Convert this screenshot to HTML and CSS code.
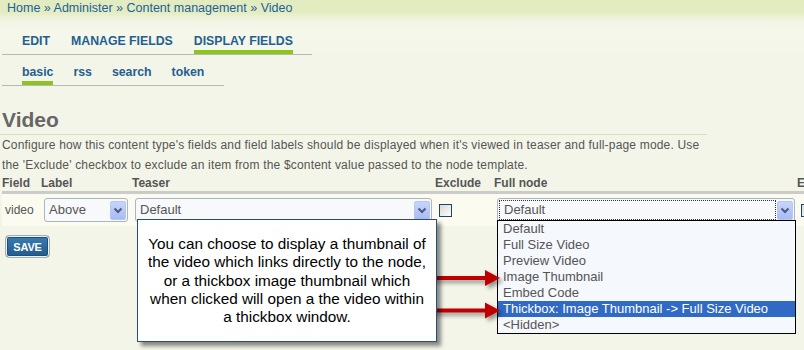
FILE: index.html
```html
<!DOCTYPE html>
<html>
<head>
<meta charset="utf-8">
<title>Video | Display fields</title>
<link rel="stylesheet" href="styles.css">
</head>
<body>
<div class="page">
  <div class="breadcrumb"><a href="#">Home</a> » <a href="#">Administer</a> » <a href="#">Content management</a> » <a href="#">Video</a></div>

  <ul class="tabs">
    <li><a href="#">EDIT</a></li>
    <li><a href="#">MANAGE FIELDS</a></li>
    <li><a href="#" class="active">DISPLAY FIELDS</a></li>
  </ul>
  <ul class="tabs subtabs">
    <li><a href="#" class="active">basic</a></li>
    <li><a href="#">rss</a></li>
    <li><a href="#">search</a></li>
    <li><a href="#">token</a></li>
  </ul>

  <h2 class="title">Video</h2>
  <p class="desc">Configure how this content type's fields and field labels should be displayed when it's viewed in teaser and full-page mode. Use the 'Exclude' checkbox to exclude an item from the $content value passed to the node template.</p>

  <div class="fields">
    <div class="thead">
      <div>Field</div><div>Label</div><div>Teaser</div><div>Exclude</div><div>Full node</div><div>Exclude</div>
    </div>
    <div class="trow">
      <div class="cell">video</div>
      <div class="cell">
        <div class="select sel-label"><span class="sel-text">Above</span><span class="sel-btn"><svg width="10" height="7" viewBox="0 0 10 7"><path d="M1.5 1.5 L5 5 L8.5 1.5" fill="none" stroke="#4a5a80" stroke-width="2"/></svg></span></div>
      </div>
      <div class="cell">
        <div class="select sel-teaser"><span class="sel-text">Default</span><span class="sel-btn"><svg width="10" height="7" viewBox="0 0 10 7"><path d="M1.5 1.5 L5 5 L8.5 1.5" fill="none" stroke="#4a5a80" stroke-width="2"/></svg></span></div>
      </div>
      <div class="cell cb-cell"><span class="checkbox"></span></div>
      <div class="cell">
        <div class="select sel-full focused"><span class="sel-text">Default</span><span class="sel-btn"><svg width="10" height="7" viewBox="0 0 10 7"><path d="M1.5 1.5 L5 5 L8.5 1.5" fill="none" stroke="#4a5a80" stroke-width="2"/></svg></span>
          <ul class="dropdown">
            <li>Default</li>
            <li>Full Size Video</li>
            <li>Preview Video</li>
            <li>Image Thumbnail</li>
            <li>Embed Code</li>
            <li class="selected">Thickbox: Image Thumbnail -&gt; Full Size Video</li>
            <li>&lt;Hidden&gt;</li>
          </ul>
        </div>
      </div>
      <div class="cell cb-cell"><span class="checkbox"></span></div>
    </div>
  </div>

  <button class="save" type="button">SAVE</button>

  <svg class="arrows" width="80" height="64" viewBox="0 0 80 64">
    <g fill="#c00000" stroke="none">
      <rect x="0" y="14" width="57" height="4"/>
      <polygon points="55,8 70,16 55,24"/>
      <rect x="0" y="46.5" width="57" height="4"/>
      <polygon points="55,40.5 70,48.5 55,56.5"/>
    </g>
  </svg>

  <div class="callout">You can choose to display a thumbnail of<br>the video which links directly to the node,<br>or a thickbox image thumbnail which<br>when clicked will open a the video within<br>a thickbox window.</div>
</div>
</body>
</html>
```

FILE: styles.css
```css
* { box-sizing: border-box; }

html, body {
  margin: 0;
  padding: 0;
  overflow: hidden;
}

body {
  background: #f3f5e8;
  background-image: linear-gradient(#e3ecc0 0px, #e3ecc0 12px, #f2f5e4 21px, #f4f7ea 32px, #f3f5e8 60px);
  background-repeat: no-repeat;
  background-size: 100% 60px;
  font-family: "Liberation Sans", Arial, sans-serif;
  font-size: 12px;
  color: #555;
}

.page {
  position: relative;
  width: 804px;
  height: 350px;
}

a {
  color: #22609a;
  text-decoration: none;
}

.breadcrumb {
  font-size: 12.5px;
  line-height: 16px;
  padding-left: 7px;
  color: #22609a;
}

.tabs {
  list-style: none;
  margin: 17px 0 0 2px;
  padding: 0 0 0 20px;
  width: 310px;
  display: flex;
  gap: 21px;
  border-bottom: 1px solid #b8b8b8;
}

.tabs a {
  display: block;
  font-weight: bold;
  font-size: 12.3px;
  line-height: 16px;
  padding-bottom: 1px;
  border-bottom: 4px solid transparent;
  color: #235f91;
}

.tabs a.active {
  border-bottom-color: #8dc51f;
}

.subtabs {
  margin-top: 9px;
  width: 222px;
  gap: 20px;
}

.subtabs a {
  font-size: 12.3px;
}

.title {
  margin: 22px 0 0 0;
  padding: 0 0 2px 2px;
  width: 707px;
  font-size: 21px;
  line-height: 24px;
  font-weight: bold;
  color: #666;
  border-bottom: 1px solid #d9ddb8;
}

.desc {
  margin: 0;
  padding-left: 2px;
  width: 707px;
  font-size: 12px;
  line-height: 20px;
  letter-spacing: 0.18px;
  color: #555;
}

.fields {
  margin-left: 2px;
  width: 860px;
}

.thead, .trow {
  display: grid;
  grid-template-columns: 39px 91px 303px 59px 303px 65px;
}

.thead {
  font-weight: bold;
  font-size: 12px;
  line-height: 16px;
  color: #555;
  border-bottom: 3px solid #cbcbcb;
}

.trow {
  background: #fbfcef;
  padding: 4px 0;
  align-items: center;
}

.cell {
  padding-left: 3px;
  font-size: 12px;
  line-height: 16px;
  color: #555;
}

.cb-cell {
  padding-left: 4px;
  display: flex;
  align-items: center;
}

.checkbox {
  display: block;
  width: 13px;
  height: 13px;
  border: 1px solid #1c4473;
  background: linear-gradient(135deg, #dcdcd4, #fbfbf8);
}

.select {
  position: relative;
  display: flex;
  align-items: center;
  height: 24px;
  border: 1px solid #a9b6c6;
  border-radius: 3px;
  background: #f7f9fb;
  font-size: 13px;
  color: #555;
}

.sel-label { width: 84px; }
.sel-teaser { width: 297px; }
.sel-full { width: 298px; }

.sel-text {
  flex: 1;
  padding-left: 4px;
  line-height: 18px;
}

.focused .sel-text {
  margin: 0 1px;
  border: 1px dotted #333;
  height: 20px;
  padding-left: 4px;
}

.sel-btn {
  width: 16px;
  height: 19px;
  margin-right: 1px;
  border: 1px solid #b8c7f2;
  border-radius: 2px;
  background: linear-gradient(#c8d5fb, #a7bcf4);
  display: flex;
  align-items: center;
  justify-content: center;
}

.dropdown {
  position: absolute;
  left: -1px;
  top: 21px;
  width: 299px;
  margin: 0;
  padding: 0;
  list-style: none;
  background: #f5f8fc;
  border: 1px solid #000;
  z-index: 3;
}

.dropdown li {
  height: 16px;
  line-height: 16px;
  padding-left: 5px;
  font-size: 13px;
  color: #555;
  white-space: nowrap;
}

.dropdown li.selected {
  background: #316ac5;
  color: #fff;
}

.save {
  display: block;
  margin: 9px 0 0 5px;
  width: 45px;
  height: 23px;
  padding: 0;
  border: 1px solid #a3acb6;
  border-radius: 4px;
  background: linear-gradient(#3b7db3, #22598a);
  box-shadow: inset 0 0 0 1px #f0f3ea, inset 0 0 0 2px #1e4f7c;
  color: #fff;
  font-family: "Liberation Sans", Arial, sans-serif;
  font-weight: bold;
  font-size: 11px;
  letter-spacing: -0.2px;
}

.arrows {
  position: absolute;
  left: 430px;
  top: 262px;
  z-index: 4;
  filter: drop-shadow(3px 3px 2px rgba(0, 0, 0, 0.4));
}

.callout {
  position: absolute;
  left: 137px;
  top: 219px;
  width: 300px;
  height: 123px;
  z-index: 5;
  background: #fff;
  border: 1.5px solid #2b4c7e;
  box-shadow: 4px 4px 4px rgba(0, 0, 0, 0.45);
  padding-top: 15px;
  text-align: center;
  font-family: "Liberation Sans", Arial, sans-serif;
  font-size: 15.3px;
  line-height: 18.3px;
  color: #000;
  white-space: nowrap;
}
```
